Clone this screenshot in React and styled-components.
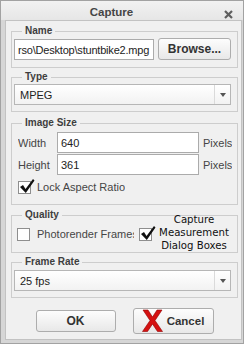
import React from "react";
import styled, { createGlobalStyle } from "styled-components";

const Global = createGlobalStyle`
  html, body { margin: 0; padding: 0; background: #ffffff; }
  body { font-family: "Liberation Sans", Arial, sans-serif; }
`;

const Dialog = styled.div`
  box-sizing: border-box;
  width: 244px;
  height: 344px;
  border: 1px solid #a2a2a2;
  background: #d6d6d6;
  padding: 0 1px 3px 4px;
  display: flex;
  flex-direction: column;
`;

const TitleBar = styled.div`
  height: 19px;
  flex: none;
  display: flex;
  align-items: center;
  justify-content: center;
  position: relative;
  background: linear-gradient(#f2f2f2, #e6e6e6);
  margin: 0 -1px 0 -4px;
  padding-right: 21px;
`;

const Title = styled.div`
  font-size: 11.5px;
  font-weight: bold;
  color: #454545;
  padding-top: 2px;
`;

const Close = styled.svg`
  position: absolute;
  right: 10px;
  top: 9px;
`;

const Panel = styled.div`
  flex: 1;
  box-sizing: border-box;
  border: 1px solid #c2c2c2;
  background: #f0f0f0;
  padding: 4px 3px 0 5px;
  display: flex;
  flex-direction: column;
`;

const Group = styled.fieldset`
  margin: ${(p) => p.$mt || "0"} 0 0 0;
  border: 1px solid #cdcdcd;
  padding: 0;
  min-width: 0;
`;

const Legend = styled.legend`
  font-size: 10px;
  font-weight: bold;
  color: #3e3e3e;
  line-height: 12px;
  padding: 0 3px;
  margin-left: 10px;
`;

const Body = styled.div`
  padding: ${(p) => p.$pad};
`;

const Row = styled.div`
  display: flex;
  align-items: ${(p) => p.$align || "center"};
  gap: ${(p) => p.$gap || "0px"};
  margin-top: ${(p) => p.$mt || "0"};
`;

const TextInput = styled.div`
  box-sizing: border-box;
  height: 21px;
  width: ${(p) => p.$w || "auto"};
  flex: ${(p) => (p.$w ? "none" : "1")};
  border: 1px solid #ababab;
  background: #fff;
  font-size: 11px;
  letter-spacing: ${(p) => (p.$tight ? "-0.2px" : "0")};
  color: #222;
  padding: 0 3px;
  display: flex;
  align-items: center;
  white-space: nowrap;
  overflow: hidden;
`;

const Button = styled.div`
  box-sizing: border-box;
  width: ${(p) => p.$w};
  height: ${(p) => p.$h};
  border: 1px solid #adadad;
  border-radius: 3px;
  background: linear-gradient(#fdfdfd, #e8e8e8);
  display: flex;
  align-items: center;
  justify-content: center;
  gap: 4px;
  font-size: ${(p) => p.$fs || "12px"};
  font-weight: bold;
  color: #333;
  flex: none;
`;

const Select = styled.div`
  box-sizing: border-box;
  height: 21px;
  border: 1px solid #b6b6b6;
  background: linear-gradient(#ffffff, #f2f2f2);
  display: flex;
  align-items: stretch;
  font-size: 11px;
  color: #222;
`;

const SelectText = styled.div`
  flex: 1;
  display: flex;
  align-items: center;
  padding-left: 5px;
`;

const Arrow = styled.div`
  width: 15px;
  border-left: 1px solid #dadada;
  display: flex;
  align-items: center;
  justify-content: center;
  &::after {
    content: "";
    border-left: 3px solid transparent;
    border-right: 3px solid transparent;
    border-top: 4px solid #555;
  }
`;

const Label = styled.div`
  font-size: 11px;
  line-height: 14px;
  color: #454545;
  width: ${(p) => p.$w || "auto"};
  margin-left: ${(p) => p.$ml || "0"};
  flex: none;
  white-space: nowrap;
  overflow: hidden;
`;

const Box = styled.div`
  box-sizing: border-box;
  width: 13px;
  height: 13px;
  border: 1px solid #8e8e8e;
  background: #fff;
  position: relative;
  flex: none;
  margin: ${(p) => p.$m || "0"};
`;

const Tick = styled.svg`
  position: absolute;
  left: 0px;
  top: -4px;
  overflow: visible;
`;

const Note = styled.div`
  font-family: "DejaVu Sans Condensed", "DejaVu Sans", Verdana, sans-serif;
  font-stretch: condensed;
  font-size: 11.3px;
  line-height: 13px;
  width: 78px;
  color: #111;
  text-align: center;
  white-space: nowrap;
  margin-left: 3px;
`;

const Buttons = styled.div`
  flex: 1;
  display: flex;
  align-items: center;
  justify-content: center;
  gap: 17px;
  padding-top: 4px;
`;

const Check = ({ on, m }) => (
  <Box $m={m}>
    {on && (
      <Tick width="16" height="16" viewBox="0 0 16 16">
        <path d="M1 9 L4 7 L6.5 11 L14 1 L15.5 2.5 L6.8 15 Z" fill="#111" />
      </Tick>
    )}
  </Box>
);

const RedX = () => (
  <svg width="21" height="23" viewBox="0 0 21 23">
    <path
      d="M1 1 L6 1 L10.5 8 L15 1 L20 1 L13 11.5 L20.5 22.5 L15.5 22.5 L10.5 15 L5.5 22.5 L0.5 22.5 L8 11.5 Z"
      fill="#d51212"
      stroke="#900000"
      strokeWidth="0.6"
    />
  </svg>
);

export default function App() {
  return (
    <>
      <Global />
      <Dialog>
        <TitleBar>
          <Title>Capture</Title>
          <Close width="9" height="9" viewBox="0 0 9 9">
            <path d="M1 1 L8 8 M8 1 L1 8" stroke="#5e5e5e" strokeWidth="2.2" />
          </Close>
        </TitleBar>
        <Panel>
          <Group>
            <Legend>Name</Legend>
            <Body $pad="1px 6px 7px 2px">
              <Row $gap="4px" $align="flex-end">
                <TextInput $tight>rso\Desktop\stuntbike2.mpg</TextInput>
                <Button $w="73px" $h="22px">Browse...</Button>
              </Row>
            </Body>
          </Group>
          <Group $mt="3px">
            <Legend>Type</Legend>
            <Body $pad="1px 6px 6px 2px">
              <Select>
                <SelectText>MPEG</SelectText>
                <Arrow />
              </Select>
            </Body>
          </Group>
          <Group $mt="5px">
            <Legend>Image Size</Legend>
            <Body $pad="3px 6px 10px 6px">
              <Row>
                <Label $w="39px">Width</Label>
                <TextInput $w="142px">640</TextInput>
                <Label $ml="4px">Pixels</Label>
              </Row>
              <Row $mt="1px">
                <Label $w="39px">Height</Label>
                <TextInput $w="142px">361</TextInput>
                <Label $ml="4px">Pixels</Label>
              </Row>
              <Row $gap="6px" $mt="5px">
                <Check on />
                <Label>Lock Aspect Ratio</Label>
              </Row>
            </Body>
          </Group>
          <Group $mt="4px">
            <Legend>Quality</Legend>
            <Body $pad="0 0 0 5px">
              <Row $align="flex-start" $mt="-8px">
                <Check m="15px 7px 0 0" />
                <Label $w="97px" style={{ marginTop: 14 }}>Photorender Frames</Label>
                <Check on m="15px 0 0 5px" />
                <Note>Capture<br />Measurement<br />Dialog Boxes</Note>
              </Row>
            </Body>
          </Group>
          <Group $mt="3px">
            <Legend>Frame Rate</Legend>
            <Body $pad="2px 6px 6px 2px">
              <Select>
                <SelectText>25 fps</SelectText>
                <Arrow />
              </Select>
            </Body>
          </Group>
          <Buttons>
            <Button $w="80px" $h="22px">OK</Button>
            <Button $w="81px" $h="26px" $fs="11.5px">
              <RedX />
              Cancel
            </Button>
          </Buttons>
        </Panel>
      </Dialog>
    </>
  );
}
